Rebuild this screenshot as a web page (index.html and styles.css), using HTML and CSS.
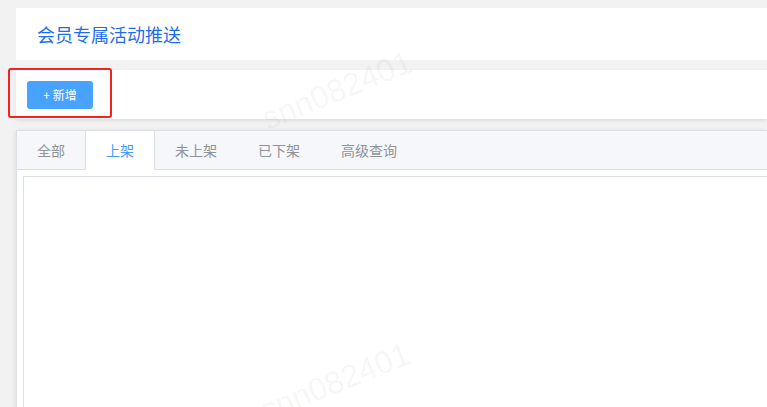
FILE: index.html
```html
<!DOCTYPE html>
<html lang="zh-CN">
<head>
    <meta charset="UTF-8">
    <meta name="viewport" content="width=device-width, initial-scale=1.0">
    <title>会员专属活动推送</title>
    <link rel="stylesheet" href="styles.css">
</head>
<body>
    <div class="page">
        <div class="header-card">
            <h1 class="title">会员专属活动推送</h1>
        </div>

        <div class="toolbar">
            <button class="btn-add">+ 新增</button>
        </div>

        <div class="tabs">
            <div class="tabs-header">
                <div class="tab">全部</div>
                <div class="tab active">上架</div>
                <div class="tab">未上架</div>
                <div class="tab">已下架</div>
                <div class="tab">高级查询</div>
            </div>
            <div class="tabs-body">
                <div class="tab-pane"></div>
            </div>
        </div>
    </div>

    <!-- annotation + watermarks -->
    <div class="mark-box"></div>
    <div class="watermark wm-1">snn082401</div>
    <div class="watermark wm-2">snn082401</div>
</body>
</html>
```

FILE: styles.css
```css
/* Basic styling */
html, body { margin: 0; height: 100%; overflow: hidden; }
body { background: #f2f2f2; font-family: "Microsoft YaHei", "Noto Sans CJK SC", "Liberation Sans", sans-serif; position: relative; }
.page { padding: 8px 0 0 16px; display: flex; flex-direction: column; }
.header-card { background: #fff; height: 52px; display: flex; align-items: center; padding-left: 21px; }
.title { margin: 0; font-size: 18px; font-weight: normal; color: #1f6cf0; }
.toolbar { background: #fff; margin-top: 10px; height: 49px; padding-left: 11px; display: flex; align-items: center; box-shadow: 0 2px 3px rgba(0,0,0,0.08); }
.btn-add { width: 66px; height: 28px; border: none; border-radius: 3px; background: #48a2ff; color: #fff; font-size: 12px; font-family: inherit; padding: 0; }
.tabs { margin-top: 11px; border: 1px solid #dcdfe6; border-right: none; background: #fff; height: 300px; box-shadow: -2px 0 4px rgba(0,0,0,0.06); }
.tabs-header { display: flex; background: #f5f7fa; border-bottom: 1px solid #dcdfe6; height: 38px; }
.tab { padding: 0 20px; line-height: 38px; font-size: 14px; color: #909399; border-right: 1px solid transparent; border-left: 1px solid transparent; margin-left: -1px; }
.tab:first-child { margin-left: 0; border-left: none; }
.tab.active { color: #409eff; background: #fff; border-left-color: #dcdfe6; border-right-color: #dcdfe6; height: 39px; }
.tabs-body { padding: 6px 0 0 6px; }
.tab-pane { border: 1px solid #dcdfe6; border-right: none; height: 260px; }
.mark-box { position: absolute; left: 8px; top: 68px; width: 100px; height: 46px; border: 2px solid #f2231f; border-radius: 3px; }
.watermark { position: absolute; font-family: "Liberation Sans", Arial, sans-serif; font-size: 32px; color: rgba(0,0,0,0.05); transform: rotate(-22deg); white-space: nowrap; pointer-events: none; }
.wm-1 { left: 258px; top: 72px; }
.wm-2 { left: 256px; top: 364px; }
```
